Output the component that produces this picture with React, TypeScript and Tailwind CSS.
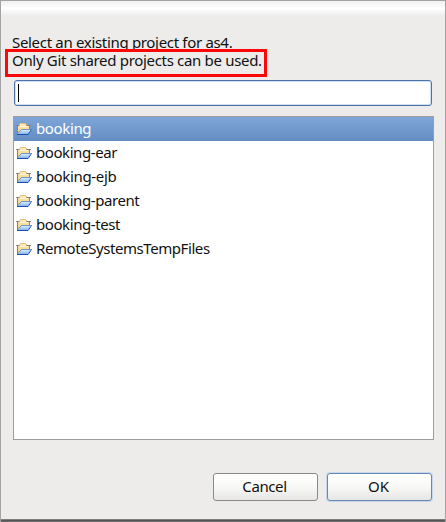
import React from "react";

const projects: { name: string; spacing: string }[] = [
  { name: "booking", spacing: "tracking-[-0.36px]" },
  { name: "booking-ear", spacing: "tracking-[-0.43px]" },
  { name: "booking-ejb", spacing: "tracking-[-0.34px]" },
  { name: "booking-parent", spacing: "tracking-[-0.43px]" },
  { name: "booking-test", spacing: "tracking-[-0.42px]" },
  { name: "RemoteSystemsTempFiles", spacing: "tracking-[-0.43px]" },
];

function FolderIcon() {
  return (
    <svg width="16" height="16" viewBox="0 0 16 16" fill="none" className="shrink-0">
      <defs>
        <linearGradient id="back" x1="0" y1="0" x2="0" y2="1">
          <stop offset="0" stopColor="#fff0c4" />
          <stop offset="1" stopColor="#f3c76c" />
        </linearGradient>
        <linearGradient id="flap" x1="0" y1="0" x2="0" y2="1">
          <stop offset="0" stopColor="#e3f1ff" />
          <stop offset="1" stopColor="#79b0f3" />
        </linearGradient>
      </defs>
      <path d="M1 13V4H3L4.5 2H9L10.5 4H14V9L12 13Z" fill="url(#back)" />
      <path d="M1.5 13V4.5M13.5 4.5V8" stroke="#a07f62" />
      <path d="M0 4.5H3.5M10 4.5H15" stroke="#8f7d88" />
      <path d="M3.5 4.5V3.5L4.5 2.5H9L10.5 3.5V4.5" stroke="#e0bd78" />
      <path d="M4 5.5H12" stroke="#fff4d4" />
      <path d="M1.5 13.5L5.5 8.5H15.5L12 13.5Z" fill="url(#flap)" />
      <path d="M1.5 13L5.5 8.5H15.5" stroke="#6f96d0" />
      <path d="M1 13.5H12L15.5 8.5" stroke="#2450a0" />
    </svg>
  );
}

export default function App() {
  return (
    <div className="flex h-[522px] w-[446px] flex-col overflow-hidden border-x border-t border-[#a3a3a3] bg-[#edeceb] font-['Noto_Sans','Open_Sans',sans-serif] text-[15px] text-[#111]">
      <div className="h-[15px] shrink-0 bg-linear-to-b from-[#f0f0f0] via-white via-50% to-[#edeceb]" />
      <div className="relative mt-[17px] ml-[11px] h-9 shrink-0 whitespace-nowrap">
        <p className="leading-[18px] tracking-[-0.32px]">
          Select an existing project for as4.
          <br />
          Only Git shared projects can be used.
        </p>
        <div className="absolute top-[16px] -left-[7px] h-[28px] w-[262px] border-[3px] border-[#fb0808]" />
      </div>
      <div className="mt-[11px] ml-[13px] flex h-[26px] w-[418px] shrink-0 items-center rounded-[3px] border border-[#4c72a8] bg-white pl-[3px] shadow-[inset_0_0_0_1px_#d0e0f4]">
        <div className="h-[18px] w-px bg-black" />
      </div>
      <ul className="mt-[10px] ml-3 h-[324px] w-[421px] shrink-0 border border-[#9f9c99] bg-white">
        {projects.map(({ name, spacing }, i) => (
          <li
            key={name}
            className={
              i === 0
                ? "flex h-6 items-center gap-1 bg-linear-to-b from-[#7fa6d8] to-[#638dc4] pl-[2px] leading-[22px] text-white"
                : "flex h-6 items-center gap-1 pl-[2px] leading-[22px]"
            }
          >
            <FolderIcon />
            <span className={`pb-[2px] ${spacing}`}>{name}</span>
          </li>
        ))}
      </ul>
      <div className="mt-[33px] flex h-7 shrink-0 justify-end gap-[9px] pr-[13px]">
        <button className="w-[105px] rounded-[3px] border border-[#8b8985] bg-linear-to-b from-white from-10% via-[#f8f8f7] via-50% to-[#e6e6e4] pr-[2px] pb-[2px] leading-6 tracking-[-0.4px]">
          Cancel
        </button>
        <button className="w-[105px] rounded-[3px] border border-[#6688b5] bg-linear-to-b from-white from-10% via-[#f8f8f7] via-50% to-[#e6e6e4] pr-[2px] pb-[2px] leading-6 shadow-[0_0_0_1px_#c7d6ea]">
          OK
        </button>
      </div>
      <div className="mt-auto -mx-px h-[3px] shrink-0 bg-linear-to-b from-[#929292] via-[#555] to-[#777]" />
    </div>
  );
}
